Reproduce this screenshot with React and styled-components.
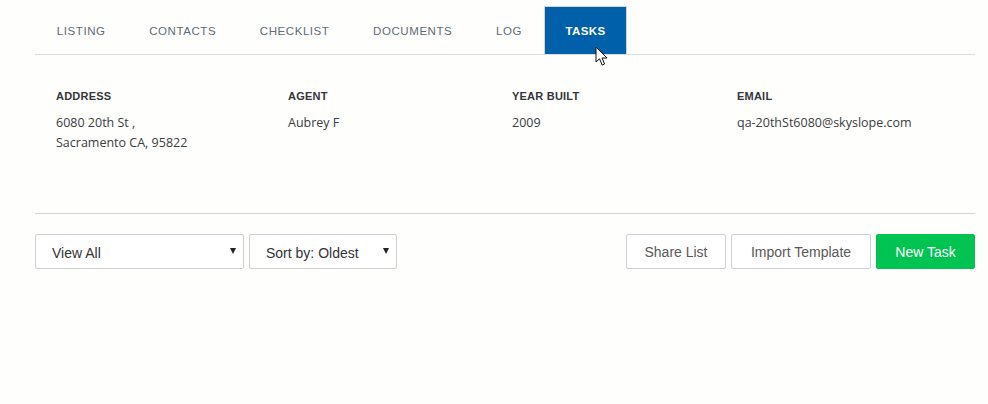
import React from 'react';
import styled, { createGlobalStyle } from 'styled-components';

const GlobalStyle = createGlobalStyle`
  body {
    margin: 0;
    background: #fefefd;
    font-family: "Open Sans", "Liberation Sans", sans-serif;
  }
`

const Page = styled.div`
  width: 940px;
  padding: 6px 0 0 35px;
`

const TabBar = styled.ul`
  display: flex;
  list-style: none;
  margin: 0;
  padding: 0;
  border-bottom: 1px solid #dcdcdc;
  height: 48px;
`

const Tab = styled.li`
  position: relative;
  display: flex;
  align-items: center;
  padding: 1px 20.8px 0;
  height: 48px;
  box-sizing: border-box;
  font-family: "Liberation Sans", sans-serif;
  font-size: 11.5px;
  letter-spacing: ${p => (p.active ? '.03em' : '.05em')};
  text-transform: uppercase;
  font-weight: ${p => (p.active ? 700 : 400)};
  color: ${p => (p.active ? '#ffffff' : '#5f6b78')};
  background: ${p => (p.active ? '#0060a9' : 'transparent')};
  border: 1px solid ${p => (p.active ? '#d4d4d4' : 'transparent')};
  border-bottom: none;
`

const Cursor = styled.svg`
  position: absolute;
  left: 50px;
  top: 39px;
  pointer-events: none;
`

const InfoGrid = styled.div`
  display: grid;
  grid-template-columns: 232px 224px 225px 1fr;
  padding: 35px 21px 0;
  height: 123px;
  border-bottom: 1px solid #d4d4d4;
`

const InfoLabel = styled.div`
  font-family: "Liberation Sans", sans-serif;
  font-weight: 700;
  font-size: 11px;
  letter-spacing: .02em;
  color: #33363b;
  margin-bottom: 11px;
`

const InfoValue = styled.div`
  font-size: 12.5px;
  line-height: 20px;
  color: #3a3d42;
`

const Toolbar = styled.div`
  display: flex;
  justify-content: space-between;
  align-items: center;
  margin-top: 20px;
`

const Group = styled.div`
  display: flex;
  gap: 5px;
`

const Select = styled.div`
  position: relative;
  box-sizing: border-box;
  width: ${p => p.width}px;
  height: 35px;
  border: 1px solid #cfcfcf;
  border-radius: 2px;
  background: #fff;
  font-family: "Liberation Sans", sans-serif;
  font-size: 14px;
  color: #333;
  display: flex;
  align-items: center;
  padding: 3px 0 0 16px;

  &::after {
    content: '';
    position: absolute;
    right: 7px;
    top: 13px;
    border-left: 3.5px solid transparent;
    border-right: 3.5px solid transparent;
    border-top: 6px solid #222;
  }
`

const Button = styled.button`
  box-sizing: border-box;
  width: ${p => p.width}px;
  height: 35px;
  padding: 0;
  border: 1px solid ${p => (p.primary ? '#00c452' : '#cfcfd4')};
  border-radius: 2px;
  background: ${p => (p.primary ? '#00c452' : '#fff')};
  color: ${p => (p.primary ? '#fff' : '#5a5a5a')};
  font-family: "Liberation Sans", sans-serif;
  font-size: 14px;
  cursor: pointer;
`

const tabs = ['Listing', 'Contacts', 'Checklist', 'Documents', 'Log', 'Tasks']

const info = [
  { label: 'Address', lines: ['6080 20th St ,', 'Sacramento CA, 95822'] },
  { label: 'Agent', lines: ['Aubrey F'] },
  { label: 'Year Built', lines: ['2009'] },
  { label: 'Email', lines: ['qa-20thSt6080@skyslope.com'] },
]

export default function App() {
  return (
    <Page>
      <GlobalStyle />
      <TabBar>
        {tabs.map(t => (
          <Tab key={t} active={t === 'Tasks'}>
            {t}
            {t === 'Tasks' && (
              <Cursor width="14" height="22" viewBox="0 0 14 22">
                <path
                  d="M1 1 L1 16 L4.5 12.8 L7.2 19 L9.6 18 L7 12 L12 12 Z"
                  fill="#fff"
                  stroke="#111"
                  strokeWidth="1"
                  strokeLinejoin="miter"
                />
              </Cursor>
            )}
          </Tab>
        ))}
      </TabBar>

      <InfoGrid>
        {info.map(item => (
          <div key={item.label}>
            <InfoLabel>{item.label.toUpperCase()}</InfoLabel>
            {item.lines.map(l => (
              <InfoValue key={l}>{l}</InfoValue>
            ))}
          </div>
        ))}
      </InfoGrid>

      <Toolbar>
        <Group>
          <Select width={209}>View All</Select>
          <Select width={148}>Sort by: Oldest</Select>
        </Group>
        <Group>
          <Button width={100}>Share List</Button>
          <Button width={140}>Import Template</Button>
          <Button primary width={99}>New Task</Button>
        </Group>
      </Toolbar>
    </Page>
  );
}
